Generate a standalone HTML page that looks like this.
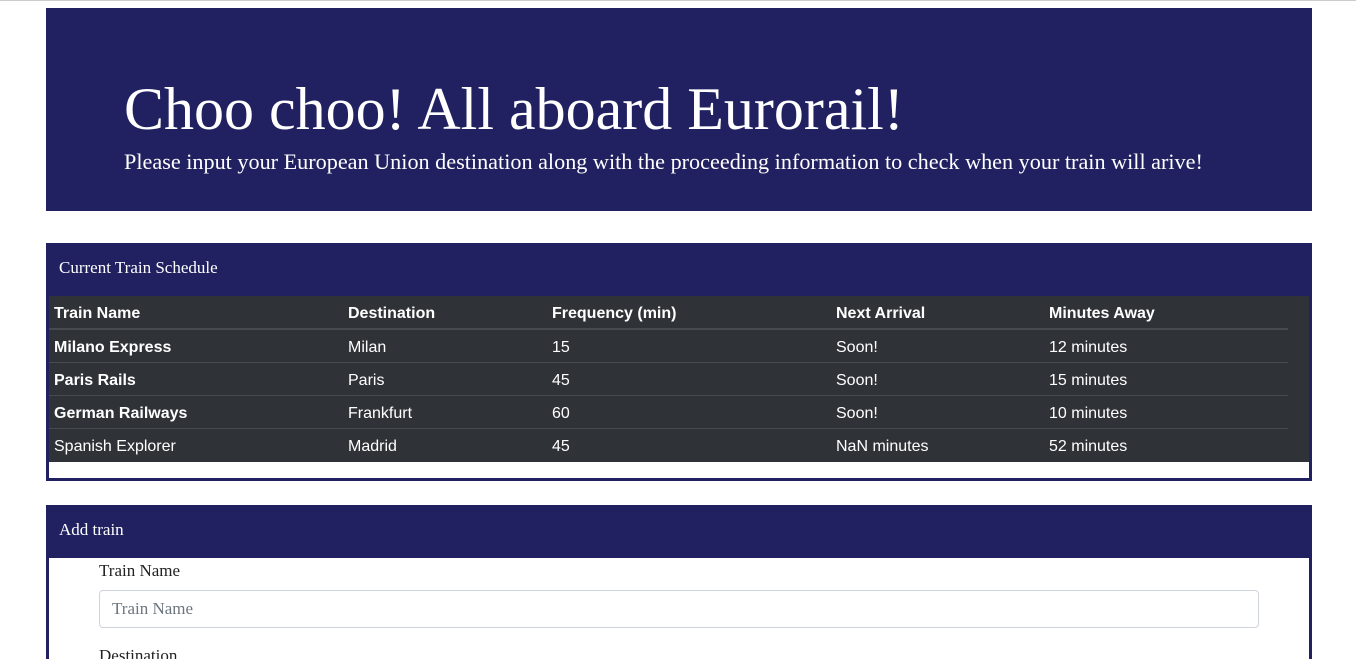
<!DOCTYPE html>
<html><head><style>
html,body{margin:0;height:659px;overflow:hidden}
body{background:#fff;font-family:"Liberation Serif",serif;width:1356px;position:relative}
.top{position:absolute;left:0;top:0;width:1356px;height:1px;background:#ccc}
.jumbo{position:absolute;left:46px;top:8px;width:1266px;height:203px;background:#212161;color:#fff}
.jumbo h1{position:absolute;left:78px;top:65px;margin:0;font-weight:normal;font-size:60px;line-height:72px}
.jumbo p{position:absolute;left:78px;top:140px;margin:0;font-size:22.2px;line-height:28px}
.panel{position:absolute;left:46px;width:1260px;border:3px solid #212161;background:#fff}
.ph{background:#212161;color:#fff;font-size:17px;height:53px;line-height:50px;padding-left:13px;margin:-3px -3px 0 -3px}
table{border-collapse:collapse;width:1239px;font-family:"Liberation Sans",sans-serif;font-size:16px;color:#fff}
.tw{background:#2f3337;height:166px}
td,th{text-align:left;padding:3px 5px 0;height:29px;border-bottom:1px solid #454b50}
th{border-bottom:2px solid #454b50}
tr:last-child td{border-bottom:none}
.b{font-weight:bold}
label{position:absolute;left:50px;font-size:17px;color:#222}
.inp{position:absolute;left:50px;width:1146px;height:36px;border:1px solid #ced4da;border-radius:4px;font-size:17px;color:#6c757d;line-height:36px;padding-left:12px}
</style></head><body>
<div class="top"></div>
<div class="jumbo"><h1>Choo choo! All aboard Eurorail!</h1><p>Please input your European Union destination along with the proceeding information to check when your train will arive!</p></div>
<div class="panel" style="top:243px;height:232px">
<div class="ph">Current Train Schedule</div>
<div class="tw"><table>
<tr><th style="width:284px">Train Name</th><th style="width:194px">Destination</th><th style="width:274px">Frequency (min)</th><th style="width:203px">Next Arrival</th><th>Minutes Away</th></tr>
<tr><td class="b">Milano Express</td><td>Milan</td><td>15</td><td>Soon!</td><td>12 minutes</td></tr>
<tr><td class="b">Paris Rails</td><td>Paris</td><td>45</td><td>Soon!</td><td>15 minutes</td></tr>
<tr><td class="b">German Railways</td><td>Frankfurt</td><td>60</td><td>Soon!</td><td>10 minutes</td></tr>
<tr><td>Spanish Explorer</td><td>Madrid</td><td>45</td><td>NaN minutes</td><td>52 minutes</td></tr>
</table></div>
</div>
<div class="panel" style="top:505px;height:151px;border-bottom:none">
<div class="ph">Add train</div>
<label style="top:53px">Train Name</label>
<div class="inp" style="top:82px">Train Name</div>
<label style="top:138px">Destination</label>
</div>
</body></html>
